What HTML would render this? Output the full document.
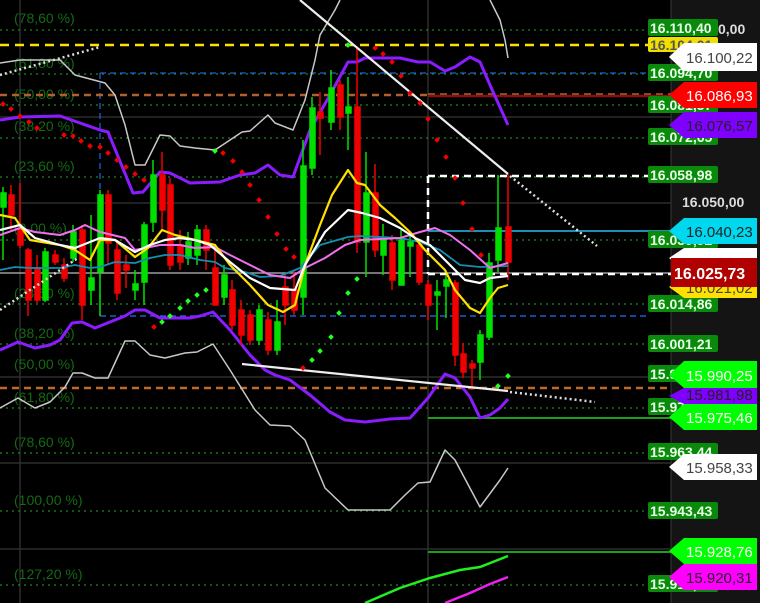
<!DOCTYPE html>
<html><head><meta charset="utf-8"><style>
html,body{margin:0;padding:0;background:#000;width:760px;height:603px;overflow:hidden}
svg{display:block}
text{font-family:"Liberation Sans",Arial,sans-serif}
</style></head><body>
<svg width="760" height="603" viewBox="0 0 760 603" xmlns="http://www.w3.org/2000/svg">
<rect width="760" height="603" fill="#000"/>
<rect x="671" y="0" width="89" height="603" fill="#141414"/>
<line x1="671" y1="0" x2="671" y2="603" stroke="#3a3a3a"/>
<!-- grid -->
<g stroke="#2e2e2e" stroke-width="1.5">
<line x1="0" y1="117" x2="671" y2="117"/><line x1="0" y1="203" x2="671" y2="203"/>
<line x1="0" y1="377" x2="671" y2="377"/><line x1="0" y1="463" x2="671" y2="463"/>
<line x1="0" y1="549" x2="671" y2="549"/>
<line x1="20" y1="0" x2="20" y2="603"/><line x1="428" y1="0" x2="428" y2="603"/>
</g>
<line x1="0" y1="273" x2="671" y2="273" stroke="#bbb" stroke-width="1.2"/>
<!-- fib dotted -->
<g stroke="#1f8a1f" stroke-width="1.3" stroke-dasharray="2,4">
<line x1="0" y1="30" x2="648" y2="30"/><line x1="0" y1="74" x2="648" y2="74"/>
<line x1="0" y1="105" x2="648" y2="105"/><line x1="0" y1="138" x2="648" y2="138"/>
<line x1="0" y1="177" x2="648" y2="177"/><line x1="0" y1="240" x2="648" y2="240"/>
<line x1="0" y1="304" x2="648" y2="304"/><line x1="0" y1="344" x2="648" y2="344"/>
<line x1="0" y1="408" x2="648" y2="408"/><line x1="0" y1="453" x2="648" y2="453"/>
<line x1="0" y1="511" x2="648" y2="511"/><line x1="0" y1="585" x2="648" y2="585"/>
</g>
<g font-size="14" fill="#136a13">
<text x="14" y="23">(78,60 %)</text><text x="14" y="68">(61,80 %)</text>
<text x="14" y="99">(50,00 %)</text><text x="14" y="131">(38,20 %)</text>
<text x="14" y="171">(23,60 %)</text><text x="14" y="233">(0,00 %)</text>
<text x="14" y="298">(23,60 %)</text><text x="14" y="338">(38,20 %)</text>
<text x="14" y="369">(50,00 %)</text><text x="14" y="402">(61,80 %)</text>
<text x="14" y="447">(78,60 %)</text><text x="14" y="505">(100,00 %)</text>
<text x="14" y="579">(127,20 %)</text>
</g>
<!-- level lines -->
<line x1="0" y1="45" x2="648" y2="45" stroke="#ffe000" stroke-width="2.5" stroke-dasharray="9,6"/>
<line x1="100" y1="73" x2="648" y2="73" stroke="#1a5fd0" stroke-width="1.3" stroke-dasharray="6,4"/>
<line x1="100" y1="73" x2="100" y2="316" stroke="#1a5fd0" stroke-width="1.3" stroke-dasharray="6,4"/>
<line x1="100" y1="316" x2="648" y2="316" stroke="#1a5fd0" stroke-width="1.5" stroke-dasharray="6,4"/>
<line x1="0" y1="95" x2="428" y2="95" stroke="#b0602a" stroke-width="2.5" stroke-dasharray="7,5"/>
<line x1="428" y1="96" x2="671" y2="96" stroke="#8a1010" stroke-width="2.5"/>
<line x1="428" y1="94" x2="671" y2="94" stroke="#a86030" stroke-width="1.5" stroke-dasharray="7,5"/>
<line x1="0" y1="388" x2="671" y2="388" stroke="#c06a2a" stroke-width="2.5" stroke-dasharray="7,5"/>
<line x1="428" y1="231" x2="671" y2="231" stroke="#1a8fb0" stroke-width="2"/>
<line x1="428" y1="418" x2="671" y2="418" stroke="#1aa01a" stroke-width="2"/>
<line x1="428" y1="552" x2="671" y2="552" stroke="#1aa01a" stroke-width="2"/>
<g stroke="#fff" stroke-width="2.5" stroke-dasharray="7,5" fill="none">
<line x1="428" y1="176" x2="671" y2="176"/><line x1="428" y1="176" x2="428" y2="274"/>
<line x1="428" y1="274" x2="671" y2="274"/>
</g>
<!-- bands -->
<g fill="none" stroke-linejoin="round">
<polyline stroke="#c8c8c8" stroke-width="1.5" points="0,63 20,60 60,60 75,75 105,83 115,95 125,125 135,165 145,165 160,135 170,136 180,146 195,148 215,150 230,140 242,132 250,131 268,115 275,123 293,130 305,100 315,60 320,35 335,10 340,0"/>
<polyline stroke="#c8c8c8" stroke-width="1.5" points="490,0 500,20 505,40 508,58"/>
<polyline stroke="#c8c8c8" stroke-width="1.5" points="0,408 18,398 35,408 50,402 65,387 73,373 82,373 95,378 108,378 125,341 135,341 150,355 165,358 185,353 197,352 213,344 230,370 255,410 270,425 290,426 305,440 325,488 348,510 390,510 405,495 418,483 430,482 445,450 455,460 480,507 500,480 508,468"/>
<polyline stroke="#8a1cff" stroke-width="3" points="0,120 20,117 60,116 100,130 108,132 133,193 143,192 160,172 170,173 190,183 220,182 240,175 255,173 268,165 280,175 293,177 310,130 330,95 348,62 357,62 365,58 400,58 418,62 430,62 445,71 455,67 470,57 480,62 490,85 508,125"/>
<polyline stroke="#8a1cff" stroke-width="3" points="0,350 18,342 35,348 50,345 60,340 72,323 82,322 95,328 110,322 125,316 135,310 145,310 160,318 170,318 190,318 200,316 213,312 230,330 250,355 265,370 275,375 290,380 310,395 330,412 345,420 365,422 390,419 410,418 428,398 445,374 455,378 470,397 480,418 490,415 500,408 508,399"/>
</g>
<!-- candles -->
<g stroke-width="1.5">
<g stroke="#00e000" fill="#00e000">
<line x1="3" y1="187" x2="3" y2="260"/><rect x="1" y="193" width="5" height="14"/>
<line x1="45" y1="248" x2="45" y2="302"/><rect x="43" y="252" width="5" height="48"/>
<line x1="73" y1="225" x2="73" y2="262"/><rect x="71" y="232" width="5" height="26"/>
<line x1="91" y1="215" x2="91" y2="305"/><rect x="89" y="278" width="5" height="12"/>
<line x1="100" y1="190" x2="100" y2="316"/><rect x="98" y="195" width="5" height="77"/>
<line x1="135" y1="270" x2="135" y2="300"/><rect x="133" y="284" width="5" height="6"/>
<line x1="144" y1="222" x2="144" y2="305"/><rect x="142" y="225" width="5" height="57"/>
<line x1="153" y1="160" x2="153" y2="232"/><rect x="151" y="175" width="5" height="47"/>
<line x1="188" y1="232" x2="188" y2="265"/><rect x="186" y="242" width="5" height="16"/>
<line x1="197" y1="225" x2="197" y2="265"/><rect x="195" y="230" width="5" height="25"/>
<line x1="224" y1="265" x2="224" y2="305"/><rect x="222" y="275" width="5" height="22"/>
<line x1="259" y1="305" x2="259" y2="345"/><rect x="257" y="310" width="5" height="30"/>
<line x1="277" y1="300" x2="277" y2="355"/><rect x="275" y="322" width="5" height="28"/>
<line x1="303" y1="140" x2="303" y2="315"/><rect x="301" y="166" width="5" height="131"/>
<line x1="312" y1="97" x2="312" y2="175"/><rect x="310" y="108" width="5" height="60"/>
<line x1="331" y1="70" x2="331" y2="130"/><rect x="329" y="88" width="5" height="34"/>
<line x1="348" y1="77" x2="348" y2="150"/><rect x="346" y="107" width="5" height="6"/>
<line x1="366" y1="152" x2="366" y2="277"/><rect x="364" y="193" width="5" height="49"/>
<line x1="383" y1="224" x2="383" y2="275"/><rect x="381" y="240" width="5" height="15"/>
<line x1="401" y1="230" x2="401" y2="285"/><rect x="399" y="240" width="5" height="45"/>
<line x1="410" y1="232" x2="410" y2="277"/><rect x="408" y="242" width="5" height="4"/>
<line x1="437" y1="280" x2="437" y2="330"/><rect x="435" y="292" width="5" height="3"/>
<line x1="446" y1="275" x2="446" y2="318"/><rect x="444" y="280" width="5" height="6"/>
<line x1="480" y1="330" x2="480" y2="380"/><rect x="478" y="335" width="5" height="27"/>
<line x1="489" y1="253" x2="489" y2="340"/><rect x="487" y="263" width="5" height="74"/>
<line x1="498" y1="175" x2="498" y2="272"/><rect x="496" y="228" width="5" height="32"/>
</g>
<g stroke="#f00000" fill="#f00000">
<line x1="11" y1="185" x2="11" y2="230"/><rect x="9" y="195" width="5" height="20"/>
<line x1="20" y1="183" x2="20" y2="248"/><rect x="18" y="230" width="5" height="15"/>
<line x1="28" y1="248" x2="28" y2="316"/><rect x="26" y="250" width="5" height="50"/>
<line x1="37" y1="255" x2="37" y2="303"/><rect x="35" y="268" width="5" height="32"/>
<line x1="55" y1="250" x2="55" y2="265"/><rect x="53" y="255" width="5" height="7"/>
<line x1="64" y1="258" x2="64" y2="282"/><rect x="62" y="265" width="5" height="13"/>
<line x1="82" y1="225" x2="82" y2="320"/><rect x="80" y="230" width="5" height="75"/>
<line x1="108" y1="190" x2="108" y2="265"/><rect x="106" y="195" width="5" height="48"/>
<line x1="117" y1="240" x2="117" y2="300"/><rect x="115" y="250" width="5" height="43"/>
<line x1="126" y1="255" x2="126" y2="288"/><rect x="124" y="265" width="5" height="5"/>
<line x1="162" y1="152" x2="162" y2="230"/><rect x="160" y="175" width="5" height="35"/>
<line x1="170" y1="178" x2="170" y2="270"/><rect x="168" y="185" width="5" height="80"/>
<line x1="180" y1="230" x2="180" y2="270"/><rect x="178" y="245" width="5" height="17"/>
<line x1="206" y1="225" x2="206" y2="270"/><rect x="204" y="230" width="5" height="20"/>
<line x1="215" y1="250" x2="215" y2="305"/><rect x="213" y="268" width="5" height="37"/>
<line x1="232" y1="280" x2="232" y2="330"/><rect x="230" y="290" width="5" height="35"/>
<line x1="241" y1="300" x2="241" y2="345"/><rect x="239" y="310" width="5" height="25"/>
<line x1="250" y1="310" x2="250" y2="345"/><rect x="248" y="315" width="5" height="25"/>
<line x1="268" y1="312" x2="268" y2="355"/><rect x="266" y="320" width="5" height="30"/>
<line x1="285" y1="275" x2="285" y2="325"/><rect x="283" y="287" width="5" height="18"/>
<line x1="294" y1="270" x2="294" y2="315"/><rect x="292" y="290" width="5" height="20"/>
<line x1="320" y1="92" x2="320" y2="155"/><rect x="318" y="112" width="5" height="6"/>
<line x1="340" y1="80" x2="340" y2="130"/><rect x="338" y="85" width="5" height="32"/>
<line x1="357" y1="47" x2="357" y2="253"/><rect x="355" y="107" width="5" height="135"/>
<line x1="375" y1="164" x2="375" y2="257"/><rect x="373" y="193" width="5" height="57"/>
<line x1="392" y1="235" x2="392" y2="290"/><rect x="390" y="243" width="5" height="37"/>
<line x1="419" y1="240" x2="419" y2="285"/><rect x="417" y="245" width="5" height="37"/>
<line x1="428" y1="280" x2="428" y2="320"/><rect x="426" y="285" width="5" height="20"/>
<line x1="455" y1="280" x2="455" y2="366"/><rect x="453" y="283" width="5" height="72"/>
<line x1="463" y1="343" x2="463" y2="378"/><rect x="461" y="354" width="5" height="18"/>
<line x1="472" y1="360" x2="472" y2="390"/><rect x="470" y="364" width="5" height="4"/>
<line x1="508" y1="174" x2="508" y2="280"/><rect x="506" y="227" width="5" height="35"/>
</g>
</g>
<!-- MAs -->
<g fill="none" stroke-linejoin="round">
<polyline stroke="#148fb0" stroke-width="1.8" points="0,270 15,267 30,268 60,268 75,265 90,268 100,267 115,262 135,263 150,258 165,255 180,255 200,260 215,262 225,268 245,272 260,277 280,276 300,268 320,245 348,237 360,236 400,238 420,242 440,250 460,265 480,267 508,266"/>
<polyline stroke="#f070f0" stroke-width="2" points="0,235 20,228 35,232 60,235 75,230 85,225 100,232 125,238 135,250 160,245 180,245 195,248 215,247 230,255 250,265 270,275 290,278 305,268 325,258 345,245 360,240 400,238 420,232 435,228 450,235 470,250 490,268 508,263"/>
<polyline stroke="#ffe000" stroke-width="2.2" points="0,215 15,218 30,240 60,245 75,250 90,260 100,240 115,240 135,257 148,248 162,230 175,235 195,240 215,245 230,265 250,285 268,305 283,312 295,305 305,265 320,225 332,195 348,170 357,183 365,185 380,205 395,218 410,232 425,250 445,270 455,290 470,308 480,313 490,298 498,288 508,285"/>
<polyline stroke="#fff" stroke-width="2.2" points="0,230 20,225 35,238 60,245 75,248 100,238 115,240 135,252 150,245 165,240 180,238 195,240 210,245 230,262 250,278 270,288 295,290 305,265 325,232 348,210 362,213 380,218 400,228 415,238 430,245 445,260 465,280 480,283 490,278 508,276"/>
</g>
<!-- trendlines -->
<line x1="300" y1="0" x2="508" y2="174" stroke="#eee" stroke-width="2.2"/>
<line x1="510" y1="176" x2="597" y2="246" stroke="#ddd" stroke-width="2.5" stroke-dasharray="2,3"/>
<line x1="0" y1="75" x2="100" y2="47" stroke="#ddd" stroke-width="2.5" stroke-dasharray="2,3"/>
<line x1="0" y1="310" x2="78" y2="258" stroke="#ddd" stroke-width="2.5" stroke-dasharray="2,3"/>
<line x1="242" y1="364" x2="508" y2="391" stroke="#eee" stroke-width="2.2"/>
<line x1="510" y1="392" x2="595" y2="402" stroke="#ddd" stroke-width="2.5" stroke-dasharray="2,3"/>
<polyline fill="none" stroke="#22ee22" stroke-width="2.5" points="365,603 400,588 430,578 460,570 480,567 508,556"/>
<polyline fill="none" stroke="#ee22ee" stroke-width="2.5" points="445,603 470,593 490,584 508,577"/>
<!-- SAR -->
<g fill="#f00000">
<rect x="1" y="102" width="4" height="4" transform="rotate(45 3 104)"/>
<rect x="9" y="107" width="4" height="4" transform="rotate(45 11 109)"/>
<rect x="18" y="114" width="4" height="4" transform="rotate(45 20 116)"/>
<rect x="27" y="120" width="4" height="4" transform="rotate(45 29 122)"/>
<rect x="35" y="126" width="4" height="4" transform="rotate(45 37 128)"/>
<rect x="62" y="133" width="4" height="4" transform="rotate(45 64 135)"/>
<rect x="71" y="134" width="4" height="4" transform="rotate(45 73 136)"/>
<rect x="79" y="139" width="4" height="4" transform="rotate(45 81 141)"/>
<rect x="88" y="144" width="4" height="4" transform="rotate(45 90 146)"/>
<rect x="98" y="145" width="4" height="4" transform="rotate(45 100 147)"/>
<rect x="106" y="151" width="4" height="4" transform="rotate(45 108 153)"/>
<rect x="115" y="158" width="4" height="4" transform="rotate(45 117 160)"/>
<rect x="124" y="165" width="4" height="4" transform="rotate(45 126 167)"/>
<rect x="133" y="172" width="4" height="4" transform="rotate(45 135 174)"/>
<rect x="142" y="178" width="4" height="4" transform="rotate(45 144 180)"/>
<rect x="221" y="151" width="4" height="4" transform="rotate(45 223 153)"/>
<rect x="231" y="159" width="4" height="4" transform="rotate(45 233 161)"/>
<rect x="240" y="170" width="4" height="4" transform="rotate(45 242 172)"/>
<rect x="248" y="183" width="4" height="4" transform="rotate(45 250 185)"/>
<rect x="257" y="198" width="4" height="4" transform="rotate(45 259 200)"/>
<rect x="266" y="215" width="4" height="4" transform="rotate(45 268 217)"/>
<rect x="275" y="232" width="4" height="4" transform="rotate(45 277 234)"/>
<rect x="284" y="247" width="4" height="4" transform="rotate(45 286 249)"/>
<rect x="292" y="255" width="4" height="4" transform="rotate(45 294 257)"/>
<rect x="373" y="46" width="4" height="4" transform="rotate(45 375 48)"/>
<rect x="381" y="52" width="4" height="4" transform="rotate(45 383 54)"/>
<rect x="390" y="60" width="4" height="4" transform="rotate(45 392 62)"/>
<rect x="399" y="74" width="4" height="4" transform="rotate(45 401 76)"/>
<rect x="408" y="91" width="4" height="4" transform="rotate(45 410 93)"/>
<rect x="418" y="101" width="4" height="4" transform="rotate(45 420 103)"/>
<rect x="426" y="117" width="4" height="4" transform="rotate(45 428 119)"/>
<rect x="435" y="138" width="4" height="4" transform="rotate(45 437 140)"/>
<rect x="444" y="155" width="4" height="4" transform="rotate(45 446 157)"/>
<rect x="453" y="176" width="4" height="4" transform="rotate(45 455 178)"/>
<rect x="461" y="201" width="4" height="4" transform="rotate(45 463 203)"/>
<rect x="470" y="227" width="4" height="4" transform="rotate(45 472 229)"/>
<rect x="479" y="253" width="4" height="4" transform="rotate(45 481 255)"/>
<rect x="152" y="325" width="4" height="4" transform="rotate(45 154 327)"/>
<rect x="301" y="366" width="4" height="4" transform="rotate(45 303 368)"/>
</g>
<g fill="#22ff22">
<rect x="213" y="149" width="4" height="4" transform="rotate(45 215 151)"/>
<rect x="346" y="43" width="4" height="4" transform="rotate(45 348 45)"/>
<rect x="160" y="320" width="4" height="4" transform="rotate(45 162 322)"/>
<rect x="168" y="314" width="4" height="4" transform="rotate(45 170 316)"/>
<rect x="178" y="306" width="4" height="4" transform="rotate(45 180 308)"/>
<rect x="186" y="299" width="4" height="4" transform="rotate(45 188 301)"/>
<rect x="195" y="293" width="4" height="4" transform="rotate(45 197 295)"/>
<rect x="204" y="288" width="4" height="4" transform="rotate(45 206 290)"/>
<rect x="310" y="358" width="4" height="4" transform="rotate(45 312 360)"/>
<rect x="318" y="349" width="4" height="4" transform="rotate(45 320 351)"/>
<rect x="329" y="335" width="4" height="4" transform="rotate(45 331 337)"/>
<rect x="337" y="311" width="4" height="4" transform="rotate(45 339 313)"/>
<rect x="346" y="291" width="4" height="4" transform="rotate(45 348 293)"/>
<rect x="355" y="277" width="4" height="4" transform="rotate(45 357 279)"/>
<rect x="496" y="384" width="4" height="4" transform="rotate(45 498 386)"/>
<rect x="506" y="374" width="4" height="4" transform="rotate(45 508 376)"/>
</g>
<!-- axis labels -->
<text x="718" y="34" font-size="14" font-weight="bold" fill="#ddd">0,00</text>
<text x="682" y="207" font-size="14" font-weight="bold" fill="#ddd">16.050,00</text>
<g font-size="14" font-weight="bold" fill="#e8ffe8">
<rect x="648" y="19" width="70" height="17" rx="2" fill="#0a8a0a"/><text x="650" y="33">16.110,40</text>
<rect x="648" y="37" width="70" height="15" rx="2" fill="#f0e000"/><text x="650" y="50" fill="#555">16.104,01</text>
<rect x="648" y="64" width="70" height="17" rx="2" fill="#0a8a0a"/><text x="650" y="78">16.094,70</text>
<rect x="648" y="96" width="70" height="17" rx="2" fill="#0a8a0a"/><text x="650" y="110">16.081,57</text>
<rect x="648" y="128" width="70" height="17" rx="2" fill="#0a8a0a"/><text x="650" y="142">16.072,65</text>
<rect x="648" y="166" width="70" height="17" rx="2" fill="#0a8a0a"/><text x="650" y="180">16.058,98</text>
<rect x="648" y="231" width="70" height="17" rx="2" fill="#0a8a0a"/><text x="650" y="245">16.030,92</text>
<rect x="648" y="295" width="70" height="17" rx="2" fill="#0a8a0a"/><text x="650" y="309">16.014,86</text>
<rect x="648" y="335" width="70" height="17" rx="2" fill="#0a8a0a"/><text x="650" y="349">16.001,21</text>
<rect x="648" y="365" width="70" height="17" rx="2" fill="#0a8a0a"/><text x="650" y="379">15.990,25</text>
<rect x="648" y="398" width="70" height="17" rx="2" fill="#0a8a0a"/><text x="650" y="412">15.977,00</text>
<rect x="648" y="443" width="70" height="17" rx="2" fill="#0a8a0a"/><text x="650" y="457">15.963,44</text>
<rect x="648" y="502" width="70" height="17" rx="2" fill="#0a8a0a"/><text x="650" y="516">15.943,43</text>
<rect x="648" y="575" width="70" height="17" rx="2" fill="#0a8a0a"/><text x="650" y="589">15.917,00</text>
</g>
<!-- tags -->
<g font-size="15">
<polygon points="669,57 684,43 757,43 757,65 684,71" fill="#fff"/><polygon points="669,57 684,43 757,43 757,71 684,71" fill="#fff"/><text x="686" y="63" fill="#444">16.100,22</text>
<polygon points="669,95 684,82 757,82 757,108 684,108" fill="#ff0000"/><text x="686" y="101" fill="#fff">16.086,93</text>
<polygon points="669,125 684,112 757,112 757,138 684,138" fill="#8000ff"/><text x="686" y="131" fill="#222">16.076,57</text>
<polygon points="669,231 684,218 757,218 757,244 684,244" fill="#00d8f0"/><text x="686" y="237" fill="#222">16.040,23</text>
<polygon points="669,287 684,278 757,278 757,298 684,298" fill="#ffe000"/><text x="686" y="293" fill="#444">16.021,02</text>
<polygon points="669,258 684,248 757,248 757,270 684,270" fill="#fff"/>
<rect x="671" y="258" width="86" height="29" fill="#b00000"/><text x="674" y="279" fill="#fff" font-weight="bold" font-size="16">16.025,73</text>
<polygon points="669,396 684,388 757,388 757,404 684,404" fill="#8000ff"/><text x="686" y="400" fill="#222">15.981,98</text>
<polygon points="669,375 684,361 757,361 757,388 684,388" fill="#00ff00"/><text x="686" y="381" fill="#fff">15.990,25</text>
<polygon points="669,417 684,404 757,404 757,430 684,430" fill="#00ff00"/><text x="686" y="423" fill="#fff">15.975,46</text>
<polygon points="669,467 684,454 757,454 757,480 684,480" fill="#fff"/><text x="686" y="473" fill="#444">15.958,33</text>
<polygon points="669,551 684,538 757,538 757,564 684,564" fill="#00ff00"/><text x="686" y="557" fill="#fff">15.928,76</text>
<polygon points="669,577 684,564 757,564 757,590 684,590" fill="#ff00ff"/><text x="686" y="583" fill="#222">15.920,31</text>
</g>
</svg>
</body></html>
